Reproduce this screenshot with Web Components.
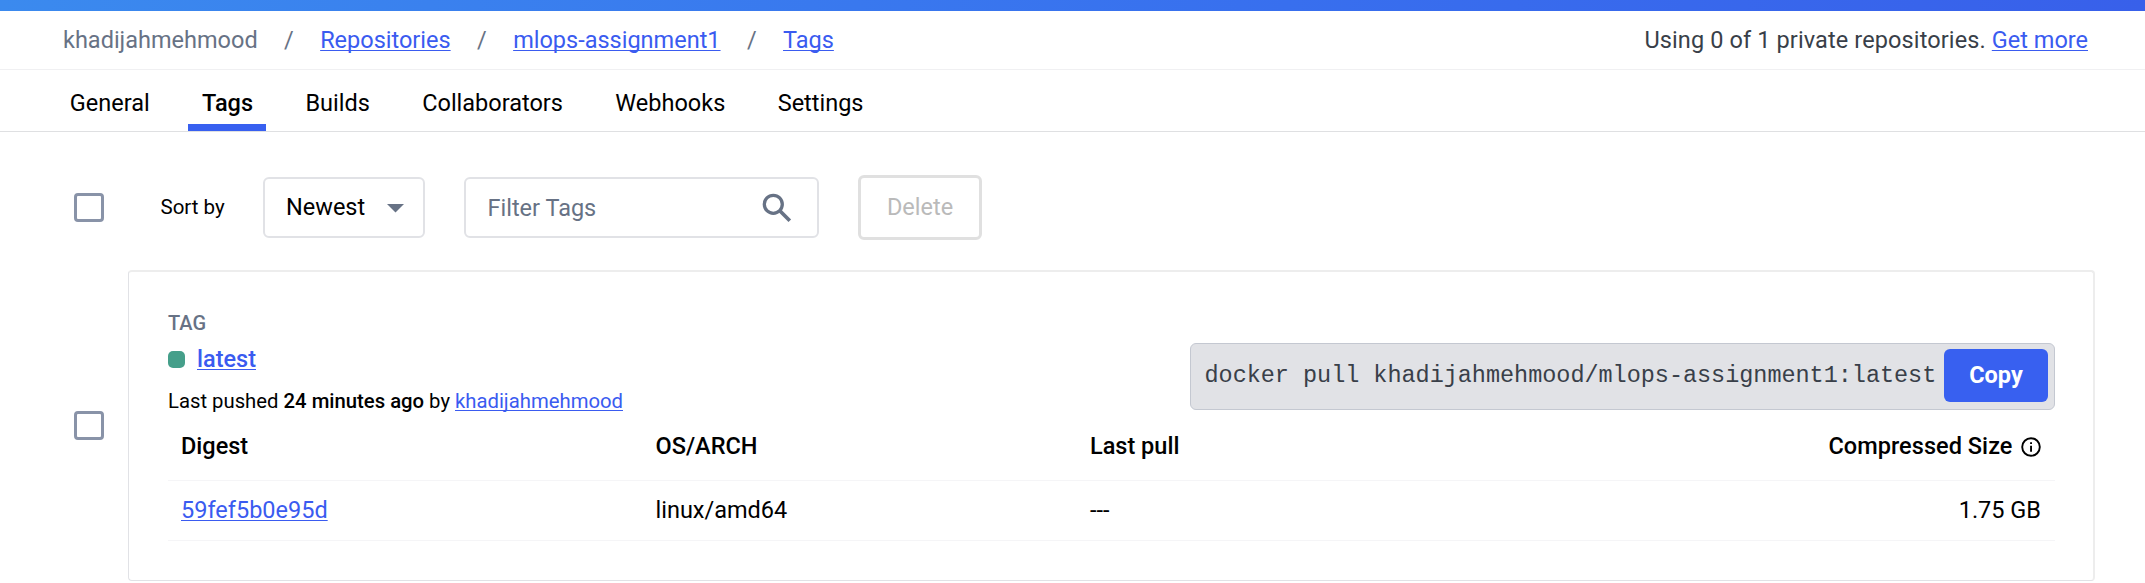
<!DOCTYPE html>
<html lang="en"><head><meta charset="utf-8"><title>Tags</title>
<style>
html,body{margin:0;background:#fff}
body{font:23.5px/30px Roboto,"Liberation Sans",sans-serif;color:#000}
</style></head><body>
<tags-page></tags-page>
<script>
const define=(name,html)=>{
  const t=document.createElement('template');
  t.innerHTML='<style>*{box-sizing:border-box}:host{box-sizing:border-box}</style>'+html;
  customElements.define(name,class extends HTMLElement{
    constructor(){super();this.attachShadow({mode:'open'}).append(t.content.cloneNode(true));}
  });
};

define('hub-link',`<style>:host{display:inline;white-space:nowrap}
a{color:#3a5bf0;text-decoration:underline;text-decoration-thickness:1.4px;text-underline-offset:2px;text-decoration-skip-ink:none}</style><a href="#"><slot></slot></a>`);

define('hub-breadcrumbs',`<style>:host{display:flex;align-items:center;justify-content:space-between;height:59px;padding:0 57px 1px 63px;border-bottom:1px solid #f0f0f2}
nav{display:flex;gap:26.4px;color:#677285}.usage{color:#393f49;white-space:nowrap;letter-spacing:.12px}.usage hub-link{letter-spacing:0}</style>
<nav><span>khadijahmehmood</span><span>/</span><hub-link>Repositories</hub-link><span>/</span><hub-link>mlops-assignment1</hub-link><span>/</span><hub-link>Tags</hub-link></nav>
<div class="usage">Using 0 of 1 private repositories. <hub-link>Get more</hub-link></div>`);

define('hub-tab',`<style>:host{display:block;padding:18px 12.8px 0 14px;border-bottom:7px solid transparent}
:host([active]){font-weight:500;border-bottom-color:#3860f0}</style><slot></slot>`);

define('hub-tabs',`<style>:host{display:flex;gap:25.6px;height:62px;padding-left:55.8px;border-bottom:1px solid #dfe0e2}</style>
<hub-tab>General</hub-tab><hub-tab active>Tags</hub-tab><hub-tab>Builds</hub-tab><hub-tab>Collaborators</hub-tab><hub-tab>Webhooks</hub-tab><hub-tab>Settings</hub-tab>`);

define('hub-checkbox',`<style>:host{display:block;flex:none;width:30px;height:29px;border:3px solid #8993a8;border-radius:4px}</style>`);

define('hub-select',`<style>:host{display:flex;align-items:center;justify-content:space-between;width:162px;height:61px;padding:0 19.500px 2px 21px;border:2px solid #e1e2e6;border-radius:6px}
svg{display:block;margin-top:3px}</style><slot></slot>
<svg width="17" height="9" viewBox="0 0 17 9"><path d="M0 0h17L8.500 8.500z" fill="#677285"/></svg>`);

define('hub-search',`<style>:host{display:flex;align-items:center;justify-content:space-between;width:355px;height:61px;padding:0 25px 0 21.500px;border:2px solid #e1e2e6;border-radius:6px;color:#677285}
svg{display:block}</style><slot></slot>
<svg width="30" height="30" viewBox="0 0 30 30" fill="none" stroke="#677285"><circle cx="11.300" cy="11.300" r="9" stroke-width="3.300"/><path d="M17.800 17.800l10 10" stroke-width="3.700"/></svg>`);

define('hub-button',`<style>:host{display:flex;align-items:center;justify-content:center}
:host([variant=outline]){width:124px;height:65px;border:3px solid #e0e0e0;border-radius:6px;color:#bababa;padding-bottom:2px}
:host([variant=primary]){width:104px;height:53px;border-radius:6px;background:#3860f0;color:#fff;font-weight:700;padding-bottom:1px}</style><slot></slot>`);

define('hub-toolbar',`<style>:host{display:flex;align-items:center;height:65px;margin-top:43px;padding-left:74px}
.sort{font-size:20.5px;width:102.5px;margin:0 0 1px 56.5px}hub-search{margin-left:39px}hub-button{margin-left:39px}</style>
<hub-checkbox></hub-checkbox><span class="sort">Sort by</span><hub-select>Newest</hub-select><hub-search>Filter Tags</hub-search><hub-button variant="outline">Delete</hub-button>`);

define('pull-command',`<style>:host{display:flex;align-items:flex-start;justify-content:space-between;width:865px;height:67px;padding:5px 6px 0 13.5px;border:1px solid #c4c8d1;border-radius:6px;background:#e1e2e6}
code{font:23.5px/54px "Liberation Mono",monospace;letter-spacing:-.03px;color:#393f49;white-space:nowrap}</style>
<code><slot></slot></code><hub-button variant="primary">Copy</hub-button>`);

define('tag-summary',`<style>:host{display:block}
.label{font-size:20px;font-weight:500;color:#677285;height:30px}
.name{display:flex;align-items:center;gap:12.5px;height:42px;font-weight:500}
.dot{width:16.5px;height:17px;border-radius:5px;background:#459f8a;margin-top:1px}
.pushed{font-size:20.3px;line-height:42px;white-space:nowrap}b{font-weight:500}</style>
<div class="label">TAG</div><div class="name"><span class="dot"></span><hub-link>latest</hub-link></div>
<div class="pushed">Last pushed <b>24 minutes ago</b> by <hub-link>khadijahmehmood</hub-link></div>`);

define('digest-row',`<style>:host{display:grid;grid-template-columns:474.5px 434.5px 1fr auto;align-items:center;height:60px;padding:0 14px 1px 13px;border-bottom:1px solid #f5f5f7}
:host([head]){height:59px;padding-bottom:11px;font-weight:500}</style>
<slot name="digest"></slot><slot name="arch"></slot><slot name="pull"></slot><slot name="size"></slot>`);

define('info-icon',`<style>:host{display:block}svg{display:block;margin-top:3px}</style>
<svg width="20" height="20" viewBox="0 0 20 20"><circle cx="10" cy="10" r="8.800" fill="none" stroke="#000" stroke-width="1.900"/><path d="M9.100 5.200h1.900v1.900h-1.900zM9.100 8.800h1.900v6h-1.900z"/></svg>`);

define('tag-card',`<style>:host{display:block;flex:1;height:311px;padding:36px 38px 0 39px;border:1px solid #e1e2e6;border-top:2px solid #ededed;border-right:2px solid #ededed;border-radius:4px}
header{display:flex;justify-content:space-between;height:114px}pull-command{margin-top:35px}
.size{display:flex;align-items:center;gap:8.500px;letter-spacing:.05px}</style>
<header><tag-summary></tag-summary><pull-command>docker pull khadijahmehmood/mlops-assignment1:latest</pull-command></header>
<digest-row head><span slot="digest">Digest</span><span slot="arch">OS/ARCH</span><span slot="pull">Last pull</span><span slot="size" class="size">Compressed Size<info-icon></info-icon></span></digest-row>
<digest-row><hub-link slot="digest">59fef5b0e95d</hub-link><span slot="arch">linux/amd64</span><span slot="pull">---</span><span slot="size">1.75 GB</span></digest-row>`);

define('tags-page',`<style>:host{display:block;height:583px;overflow:hidden}
.banner{height:11px;background:linear-gradient(90deg,#3b8aee,#386fee 60%,#3860ea)}
.row{display:flex;align-items:center;gap:24px;margin-top:30px;padding:0 50px 0 74px}</style>
<div class="banner"></div><hub-breadcrumbs></hub-breadcrumbs><hub-tabs></hub-tabs>
<hub-toolbar></hub-toolbar>
<div class="row"><hub-checkbox></hub-checkbox><tag-card></tag-card></div>`);
</script></body></html>
